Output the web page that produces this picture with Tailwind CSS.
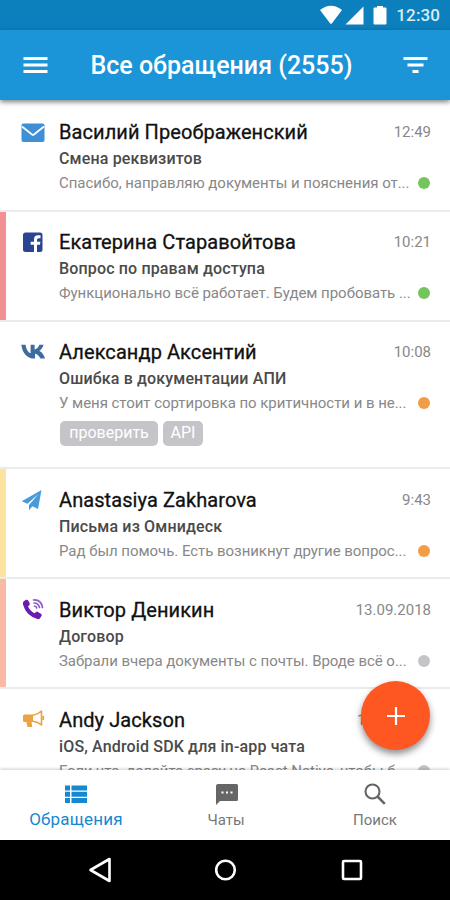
<!DOCTYPE html>
<html lang="ru">
<head>
<meta charset="utf-8">
<meta name="viewport" content="width=device-width, initial-scale=1">
<title>Все обращения</title>
<script src="https://cdn.jsdelivr.net/npm/@tailwindcss/browser@4"></script>
</head>
<body class="bg-white font-['Roboto',sans-serif]">
<div class="relative flex h-[900px] w-[450px] flex-col overflow-hidden bg-white">

  <!-- Status bar -->
  <div class="flex h-[30px] shrink-0 items-center justify-end bg-[#0c7fbd] pr-2.5 text-white">
    <svg class="mr-[2px] h-5 w-[24px]" viewBox="0 0 24 20" fill="currentColor"><path d="M1 5Q12-3.500 23 5L13 18.300Q12 19.300 11 18.300Z"/></svg>
    <svg class="mr-[9px] h-5 w-[19px]" viewBox="0 0 19 20" fill="currentColor"><path d="M18.500 1.500V19.500H.5Z"/></svg>
    <svg class="mr-[9px] h-5 w-[14px]" viewBox="0 0 14 20" fill="currentColor"><path d="M4 1h6v1.500h2.500a1 1 0 0 1 1 1v15a1 1 0 0 1-1 1h-11a1 1 0 0 1-1-1v-15a1 1 0 0 1 1-1H4z"/></svg>
    <span class="text-[17px] leading-none font-medium tracking-[0.1px] text-[#d9ecf8]">12:30</span>
  </div>

  <!-- App bar -->
  <header class="relative z-10 flex h-[70px] shrink-0 items-center bg-[#1b95d8] pl-[23px] text-white shadow-[0_2px_5px_rgba(0,0,0,0.5)]">
    <svg class="h-[18px] w-[25px] shrink-0" viewBox="0 0 25 18" fill="currentColor"><path d="M.5 1h24v3H.5zM.5 7.500h24v3H.5zM.5 14h24v3H.5z"/></svg>
    <h1 class="ml-[42.500px] flex-1 text-[25px] leading-none font-medium whitespace-nowrap">Все обращения (2555)</h1>
    <svg class="mr-[22px] h-[18px] w-[25px] shrink-0" viewBox="0 0 25 18" fill="currentColor"><path d="M.5 1h24v3H.5zM4.500 7.500h16v3h-16zM9.500 14h6v3h-6z"/></svg>
  </header>

  <!-- Ticket list -->
  <main class="flex min-h-0 flex-1 flex-col overflow-hidden pt-[2px]">

    <article class="flex h-[110px] shrink-0 border-b-2 border-[#ebebeb]">
      <div class="w-1.5 shrink-0"></div>
      <div class="w-[53px] shrink-0 pt-[19px] pl-[15px]">
        <svg class="h-[24px] w-[24px]" viewBox="0 0 24 24"><rect x=".5" y="2.500" width="23" height="18.500" rx="2" fill="#3d8fd6"/><path d="M1 5.500 11 13.500Q12 14.300 13 13.500L23 5.500" fill="none" stroke="#fff" stroke-width="1.700"/></svg>
      </div>
      <div class="min-w-0 flex-1 pt-[17px] pr-[19px]">
        <div class="flex h-[26px] items-center justify-between"><h2 class="text-[20px] tracking-[0.08px] text-[#111] [-webkit-text-stroke:0.3px]">Василий Преображенский</h2><time class="text-[15px] text-[#888]">12:49</time></div>
        <p class="h-[26px] text-[16px] leading-[28px] font-medium tracking-[0.15px] text-[#4a4a4a]">Смена реквизитов</p>
        <div class="flex h-[25px] items-center justify-between"><p class="text-[15px] tracking-[-0.04px] whitespace-nowrap text-[#888]">Спасибо, направляю документы и пояснения от...</p><i class="mr-px mb-px size-3 rounded-full bg-[#74c65c]"></i></div>
      </div>
    </article>

    <article class="flex h-[110px] shrink-0 border-b-2 border-[#ebebeb]">
      <div class="w-1.5 shrink-0 bg-[#f29093]"></div>
      <div class="w-[53px] shrink-0 pt-[19px] pl-[15px]">
        <svg class="h-[24px] w-[24px]" viewBox="0 0 24 24"><rect x="2" y="1.500" width="19.500" height="19.500" rx="2.500" fill="#2b4593"/><path d="M13 21v-7.200h-3.300v-3H13V8.500Q13 4.300 17 4.300h2.500v2.900h-1.900q-1.600 0-1.600 1.600v2h3.400l-.5 3H16V21z" fill="#fff"/></svg>
      </div>
      <div class="min-w-0 flex-1 pt-[17px] pr-[19px]">
        <div class="flex h-[26px] items-center justify-between"><h2 class="text-[20px] tracking-[0.08px] text-[#111] [-webkit-text-stroke:0.3px]">Екатерина Старавойтова</h2><time class="text-[15px] text-[#888]">10:21</time></div>
        <p class="h-[26px] text-[16px] leading-[28px] font-medium tracking-[0.15px] text-[#4a4a4a]">Вопрос по правам доступа</p>
        <div class="flex h-[25px] items-center justify-between"><p class="text-[15px] tracking-[-0.04px] whitespace-nowrap text-[#888]">Функционально всё работает. Будем пробовать ...</p><i class="mr-px mb-px size-3 rounded-full bg-[#74c65c]"></i></div>
      </div>
    </article>

    <article class="flex h-[147px] shrink-0 border-b-2 border-[#ebebeb]">
      <div class="w-1.5 shrink-0"></div>
      <div class="w-[53px] shrink-0 pt-[19px] pl-[15px]">
        <svg class="h-[24px] w-[24px]" viewBox="0 0 24 24" fill="#3d6c9f"><path d="M12.600 18.300C5.800 18.300 1.400 13.400.3 5h4c.5 5.200 2.900 7.600 4.600 8V5h3.700v4.600c1.800-.2 3.700-2.300 4.400-4.600h3.900c-.5 2.700-2.600 4.900-4 5.900 1.600.8 4.100 2.900 5.300 7.400h-4.200c-.8-2.300-2.800-4.300-5-4.700v4.700z" transform="translate(0 -1.600) scale(1.080 1.050)"/></svg>
      </div>
      <div class="min-w-0 flex-1 pt-[17px] pr-[19px]">
        <div class="flex h-[26px] items-center justify-between"><h2 class="text-[20px] tracking-[0.08px] text-[#111] [-webkit-text-stroke:0.3px]">Александр Аксентий</h2><time class="text-[15px] text-[#888]">10:08</time></div>
        <p class="h-[26px] text-[16px] leading-[28px] font-medium tracking-[0.15px] text-[#4a4a4a]">Ошибка в документации АПИ</p>
        <div class="flex h-[25px] items-center justify-between"><p class="text-[15px] tracking-[-0.04px] whitespace-nowrap text-[#888]">У меня стоит сортировка по критичности и в не...</p><i class="mr-px mb-px size-3 rounded-full bg-[#f09d45]"></i></div>
        <div class="mt-[4.500px] ml-[1px] flex gap-[5px] text-[16px] leading-[24px] text-white">
          <span class="h-[25px] w-[98px] rounded-[5px] bg-[#c5c5c9] text-center">проверить</span>
          <span class="h-[25px] w-[40px] rounded-[5px] bg-[#c5c5c9] text-center">API</span>
        </div>
      </div>
    </article>

    <article class="flex h-[110px] shrink-0 border-b-2 border-[#ebebeb]">
      <div class="w-1.5 shrink-0 bg-[#fee3a0]"></div>
      <div class="w-[53px] shrink-0 pt-[20px] pl-[15px]">
        <svg class="h-[24px] w-[24px]" viewBox="0 0 24 24" fill="#459bdb"><path d="M20.500 1 .8 12.300l5.600 2.500L17.500 5 8 16v5.200l3.400-4 5.600 2.700z"/></svg>
      </div>
      <div class="min-w-0 flex-1 pt-[18px] pr-[19px]">
        <div class="flex h-[26px] items-center justify-between"><h2 class="text-[20px] tracking-[0.08px] text-[#111] [-webkit-text-stroke:0.3px]">Anastasiya Zakharova</h2><time class="text-[15px] text-[#888]">9:43</time></div>
        <p class="h-[26px] text-[16px] leading-[28px] font-medium tracking-[0.15px] text-[#4a4a4a]">Письма из Омнидеск</p>
        <div class="flex h-[25px] items-center justify-between"><p class="text-[15px] tracking-[-0.04px] whitespace-nowrap text-[#888]">Рад был помочь. Есть возникнут другие вопрос...</p><i class="mr-px mb-0.5 size-3 rounded-full bg-[#f09d45]"></i></div>
      </div>
    </article>

    <article class="flex h-[110px] shrink-0 border-b-2 border-[#ebebeb]">
      <div class="w-1.5 shrink-0 bg-[#f9b9a5]"></div>
      <div class="w-[53px] shrink-0 pt-[19px] pl-[15px]">
        <svg class="h-[24px] w-[24px]" viewBox="0 0 24 24"><path d="M2.500 3.500 5 1.800q1.200-.5 2 .5l1.700 3q.5 1-.4 1.900L7 8.300q1.800 4.500 6.600 7l1.500-1.400q.9-.7 1.900 0l3.200 2q1 .8.400 1.900L19 20.300q-1 1.200-2.600.8Q5 17.500 2 6.500 1.600 4.500 2.500 3.500z" fill="#6a1bb0"/><path d="M12.500 2Q20 1.500 21.500 9.500M13 5q4.500 0 5.500 4.500M13.500 8q1.800.1 2.200 2" fill="none" stroke="#8d5cc4" stroke-width="1.700" stroke-linecap="round"/></svg>
      </div>
      <div class="min-w-0 flex-1 pt-[18px] pr-[19px]">
        <div class="flex h-[26px] items-center justify-between"><h2 class="text-[20px] tracking-[0.08px] text-[#111] [-webkit-text-stroke:0.3px]">Виктор Деникин</h2><time class="text-[15px] text-[#888]">13.09.2018</time></div>
        <p class="h-[26px] text-[16px] leading-[28px] font-medium tracking-[0.15px] text-[#4a4a4a]">Договор</p>
        <div class="flex h-[25px] items-center justify-between"><p class="text-[15px] tracking-[-0.04px] whitespace-nowrap text-[#888]">Забрали вчера документы с почты. Вроде всё о...</p><i class="mr-px mb-0.5 size-3 rounded-full bg-[#c5c5c9]"></i></div>
      </div>
    </article>

    <article class="flex h-[110px] shrink-0">
      <div class="w-1.5 shrink-0"></div>
      <div class="w-[53px] shrink-0 pt-[19px] pl-[15px]">
        <svg class="h-[24px] w-[24px]" viewBox="0 0 24 24"><path d="M3.500 6.500H12V14h-1.500l.8 5H6.500L5.300 14H3.500A1.500 1.500 0 0 1 2 12.500V8a1.500 1.500 0 0 1 1.500-1.500z" fill="#eba240"/><path d="M12 7.200Q17 6.500 20.500 3v14Q17 13.800 12 13.200M22.300 8.500v3" fill="none" stroke="#eba240" stroke-width="1.600" stroke-linejoin="round" stroke-linecap="round"/></svg>
      </div>
      <div class="min-w-0 flex-1 pt-[18px] pr-[19px]">
        <div class="flex h-[26px] items-center justify-between"><h2 class="text-[20px] tracking-[0.08px] text-[#111] [-webkit-text-stroke:0.3px]">Andy Jackson</h2><time class="pr-[7px] text-[15px] text-[#888]">1.09.2018</time></div>
        <p class="h-[26px] text-[16px] leading-[28px] font-medium tracking-[0.15px] text-[#4a4a4a]">iOS, Android SDK для in-app чата</p>
        <div class="flex h-[25px] items-center justify-between"><p class="text-[15px] tracking-[-0.04px] whitespace-nowrap text-[#888]">Если что, делайте сразу на React Native, чтобы б...</p><i class="mr-px mb-0.5 size-3 rounded-full bg-[#c5c5c9]"></i></div>
      </div>
    </article>
  </main>

  <!-- Create button -->
  <button class="absolute top-[681px] left-[361px] flex size-[69px] items-center justify-center rounded-full bg-[#ff5722] shadow-[0_4px_7px_rgba(0,0,0,0.45)]" aria-label="Создать">
    <svg class="size-5" viewBox="0 0 20 20" fill="#fff"><path d="M8.900 1h2.200v7.900H19v2.200h-7.900V19H8.900v-7.900H1V8.900h7.900z"/></svg>
  </button>

  <!-- Bottom tabs -->
  <nav class="relative z-20 flex h-[70px] shrink-0 bg-white text-[#777] shadow-[0_-1px_3px_rgba(0,0,0,0.2)]">
    <a class="flex w-[152px] flex-col items-center pt-[13px] text-[#1588cf]">
      <svg class="h-[22px] w-[24px]" viewBox="0 0 24 22" fill="currentColor"><path d="M1 2.500h5v5H1zM7.500 2.500H23v5H7.500zM1 8.800h5v5H1zM7.500 8.800H23v5H7.500zM1 15.100h5v5H1zM7.500 15.100H23v5H7.500z"/></svg>
      <span class="text-[17px] leading-[28px] tracking-[0.2px]">Обращения</span>
    </a>
    <a class="flex w-[148px] flex-col items-center pt-[13px]">
      <svg class="ml-[2px] h-[22px] w-[24px]" viewBox="0 0 24 22"><path d="M3 1h18.500a1.500 1.500 0 0 1 1.500 1.500v14a1.500 1.500 0 0 1-1.500 1.500H5l-4 4V3a2 2 0 0 1 2-2z" fill="#666"/><path d="M6.500 8.500h2v2h-2zM11 8.500h2v2h-2zM15.500 8.500h2v2h-2z" fill="#fff"/></svg>
      <span class="text-[15px] leading-[31px]">Чаты</span>
    </a>
    <a class="flex w-[150px] flex-col items-center pt-[13px]">
      <svg class="h-[22px] w-[24px]" viewBox="0 0 24 22" fill="none" stroke="#666"><circle cx="9.500" cy="8.500" r="7" stroke-width="2.100"/><path d="m14.500 13.500 7.300 7.300" stroke-width="2.500"/></svg>
      <span class="text-[15px] leading-[31px]">Поиск</span>
    </a>
  </nav>

  <!-- System navigation -->
  <div class="relative z-20 flex h-[60px] shrink-0 items-center bg-black pl-[88px] text-white">
    <svg class="h-[26px] w-[24px]" viewBox="0 0 24 26" fill="none" stroke="currentColor" stroke-width="2.600" stroke-linejoin="round"><path d="M21.500 2v22L2.500 13z"/></svg>
    <svg class="ml-[101px] size-6" viewBox="0 0 24 24" fill="none" stroke="currentColor" stroke-width="2.600"><circle cx="12.500" cy="12" r="9.300"/></svg>
    <svg class="ml-[103px] size-6" viewBox="0 0 24 24" fill="none" stroke="currentColor" stroke-width="2.600" stroke-linejoin="round"><rect x="3" y="3" width="18" height="18" rx="1"/></svg>
  </div>
</div>
</body>
</html>
